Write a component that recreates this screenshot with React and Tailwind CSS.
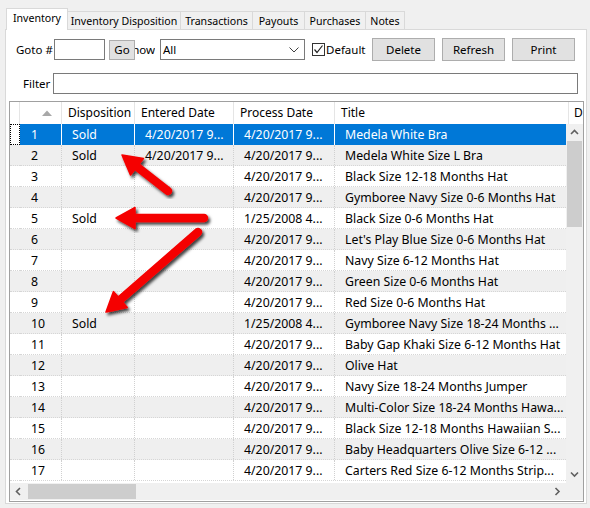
import React from 'react';

const tabs = [
  { label: 'Inventory', w: 'w-[62px]', active: true },
  { label: 'Inventory Disposition', w: 'w-[113px]' },
  { label: 'Transactions', w: 'w-[72px]' },
  { label: 'Payouts', w: 'w-[52px]' },
  { label: 'Purchases', w: 'w-[61px]' },
  { label: 'Notes', w: 'w-[39px]' },
];

const rows = [
  ['1', 'Sold', '4/20/2017 9...', '4/20/2017 9...', 'Medela White Bra'],
  ['2', 'Sold', '4/20/2017 9...', '4/20/2017 9...', 'Medela White Size L Bra'],
  ['3', '', '', '4/20/2017 9...', 'Black Size 12-18 Months Hat'],
  ['4', '', '', '4/20/2017 9...', 'Gymboree Navy Size 0-6 Months Hat'],
  ['5', 'Sold', '', '1/25/2008 4...', 'Black Size 0-6 Months Hat'],
  ['6', '', '', '4/20/2017 9...', "Let's Play Blue Size 0-6 Months Hat"],
  ['7', '', '', '4/20/2017 9...', 'Navy Size 6-12 Months Hat'],
  ['8', '', '', '4/20/2017 9...', 'Green Size 0-6 Months Hat'],
  ['9', '', '', '4/20/2017 9...', 'Red Size 0-6 Months Hat'],
  ['10', 'Sold', '', '1/25/2008 4...', 'Gymboree Navy Size 18-24 Months ...'],
  ['11', '', '', '4/20/2017 9...', 'Baby Gap Khaki Size 6-12 Months Hat'],
  ['12', '', '', '4/20/2017 9...', 'Olive Hat'],
  ['13', '', '', '4/20/2017 9...', 'Navy Size 18-24 Months Jumper'],
  ['14', '', '', '4/20/2017 9...', 'Multi-Color Size 18-24 Months Hawa...'],
  ['15', '', '', '4/20/2017 9...', 'Black Size 12-18 Months Hawaiian S...'],
  ['16', '', '', '4/20/2017 9...', 'Baby Headquarters Olive Size 6-12 ...'],
  ['17', '', '', '4/20/2017 9...', 'Carters Red Size 6-12 Months Strip...'],
];

// red callout arrows: [tailX, tailY, tipX, tipY]
const arrows = [
  [168, 191, 122, 155],
  [204, 218, 116, 218],
  [198, 232, 106, 312],
];

const arrowShape = ([x1, y1, x2, y2]) => {
  const dx = x2 - x1;
  const dy = y2 - y1;
  const len = Math.hypot(dx, dy);
  const ux = dx / len;
  const uy = dy / len;
  const L = 19;
  const W = 10.5;
  const bx = x2 - ux * L;
  const by = y2 - uy * L;
  const head = [
    [x2, y2],
    [bx - uy * W, by + ux * W],
    [bx + uy * W, by - ux * W],
  ]
    .map((p) => p.join(','))
    .join(' ');
  return { head, shaft: [x1, y1, bx + ux * 2, by + uy * 2] };
};

const Chevron = ({ dir }) => {
  const paths = {
    up: 'M1 5 L4.5 1.5 L8 5',
    down: 'M1 1.5 L4.5 5 L8 1.5',
    left: 'M5 1 L1.5 4.5 L5 8',
    right: 'M1.5 1 L5 4.5 L1.5 8',
  };
  const vertical = dir === 'up' || dir === 'down';
  return (
    <svg width={vertical ? 9 : 7} height={vertical ? 7 : 9} viewBox={vertical ? '0 0 9 7' : '0 0 7 9'}>
      <path d={paths[dir]} fill="none" stroke="#606060" strokeWidth="1.6" />
    </svg>
  );
};

const Button = ({ children, className }) => (
  <button className={`h-[23px] bg-[#e1e1e1] border border-[#adadad] text-[11.5px] text-black ${className}`}>
    {children}
  </button>
);

const GridRow = ({ r, i }) => {
  const selected = i === 0;
  const even = (i + 1) % 2 === 0;
  const bg = selected ? 'bg-[#0078d7] text-white' : even ? 'bg-[#efefef] text-black' : 'bg-white text-black';
  const sep = selected ? 'border-r border-white' : 'border-r border-dotted border-[#d0d0d0]';
  const line = selected ? '' : 'border-b border-dotted border-[#d6d6d6]';
  return (
    <div className="flex h-[21px] text-[12.3px] leading-[21px]">
      <div className={`w-[10px] shrink-0 ${selected ? 'border border-dotted border-black bg-white' : `${bg} ${line}`}`} />
      <div className={`flex ${bg} ${line}`}>
        <div className={`w-[42px] pl-[11px] ${sep}`}>{r[0]}</div>
        <div className={`w-[73px] pl-[10px] ${sep}`}>{r[1]}</div>
        <div className={`w-[99px] pl-[10px] whitespace-nowrap overflow-hidden ${sep}`}>{r[2]}</div>
        <div className={`w-[101px] pl-[10px] whitespace-nowrap overflow-hidden ${sep}`}>{r[3]}</div>
        <div className="w-[231px] pl-[10px] whitespace-nowrap overflow-hidden">{r[4]}</div>
      </div>
    </div>
  );
};

export default function App() {
  return (
    <div className="relative w-[590px] h-[508px] bg-[#f0f0f0] font-['Noto_Sans',sans-serif] text-black overflow-hidden">
      {/* tab strip */}
      <div className="flex items-end h-[21px] mt-[8px] pl-[6px]">
        {tabs.map((t) =>
          t.active ? (
            <div
              key={t.label}
              className={`relative z-10 ${t.w} h-[22px] -mb-px bg-white border-t border-l border-r border-[#d9d9d9] text-[10.6px] text-center leading-[18px] whitespace-nowrap`}
            >
              {t.label}
            </div>
          ) : (
            <div
              key={t.label}
              className={`${t.w} h-[18px] bg-[#f0f0f0] border-t border-r border-[#d9d9d9] text-[10.6px] text-center leading-[19px] whitespace-nowrap overflow-hidden`}
            >
              {t.label}
            </div>
          )
        )}
      </div>

      {/* tab page */}
      <div className="ml-[5px] w-[582px] h-[475px] bg-white border border-[#d9d9d9] flex flex-col">
        <div className="flex items-center h-[23px] mt-[8px] text-[11.5px]">
          <span className="ml-[10px] w-[38px] whitespace-nowrap">Goto #</span>
          <div className="w-[51px] h-[21px] border border-[#7a7a7a] bg-white" />
          <div className="relative z-10 ml-[4px] w-[26px] h-[20px] bg-[#e1e1e1] border border-[#adadad] flex items-center justify-center">
            Go
          </div>
          <div className="w-[20px] flex justify-end overflow-hidden whitespace-nowrap">Show</div>
          <div className="ml-[5px] w-[145px] h-[21px] border border-[#7a7a7a] bg-white flex items-center justify-between pl-[2px] pr-[5px]">
            <span>All</span>
            <svg width="10" height="6" viewBox="0 0 10 6">
              <path d="M0.5 0.5 L5 5 L9.5 0.5" fill="none" stroke="#404040" strokeWidth="1" />
            </svg>
          </div>
          <div className="ml-[7px] w-[13px] h-[13px] border border-[#333333] bg-white flex items-center justify-center">
            <svg width="11" height="11" viewBox="0 0 11 11">
              <path d="M1.5 5.5 L4 8.5 L9.5 1.5" fill="none" stroke="#222222" strokeWidth="1.2" />
            </svg>
          </div>
          <span className="ml-[1px] w-[46px]">Default</span>
          <Button className="w-[63px]">Delete</Button>
          <Button className="ml-[7px] w-[63px]">Refresh</Button>
          <Button className="ml-[7px] w-[63px]">Print</Button>
        </div>

        <div className="flex items-center h-[21px] mt-[12px] text-[11.5px]">
          <span className="ml-[17px] w-[30px]">Filter</span>
          <div className="w-[525px] h-[21px] border border-[#7a7a7a] bg-white" />
        </div>

        {/* data grid */}
        <div className="mt-[7px] ml-[3px] w-[575px] h-[401px] border border-[#a0a0a0] bg-white flex flex-col">
          <div className="flex h-[22px] text-[12px] leading-[22px] bg-white">
            <div className="w-[10px] border-r border-[#e5e5e5]" />
            <div className="w-[42px] border-r border-[#e5e5e5] flex items-center justify-center pl-[12px]">
              <svg width="10" height="6" viewBox="0 0 10 6">
                <path d="M0 6 L5 0.5 L10 6 Z" fill="#a8a8a8" />
              </svg>
            </div>
            <div className="w-[73px] pl-[6px] border-r border-[#e5e5e5] whitespace-nowrap overflow-hidden">Disposition</div>
            <div className="w-[99px] pl-[6px] border-r border-[#e5e5e5] whitespace-nowrap">Entered Date</div>
            <div className="w-[101px] pl-[6px] border-r border-[#e5e5e5] whitespace-nowrap">Process Date</div>
            <div className="w-[234px] pl-[6px] border-r border-[#e5e5e5]">Title</div>
            <div className="w-[14px] pl-[5px] overflow-hidden">D</div>
          </div>

          <div className="flex h-[359px]">
            <div className="w-[556px] overflow-hidden">
              {rows.map((r, i) => (
                <GridRow key={r[0]} r={r} i={i} />
              ))}
            </div>
            <div className="w-[17px] bg-[#f0f0f0] flex flex-col">
              <div className="h-[17px] flex items-center justify-center">
                <Chevron dir="up" />
              </div>
              <div className="mx-[1px] h-[86px] bg-[#cdcdcd]" />
              <div className="flex-1" />
              <div className="h-[17px] flex items-center justify-center">
                <Chevron dir="down" />
              </div>
            </div>
          </div>

          <div className="flex h-[17px]">
            <div className="w-[556px] bg-[#f0f0f0] flex items-center">
              <div className="w-[17px] flex items-center justify-center">
                <Chevron dir="left" />
              </div>
              <div className="w-[108px] h-[15px] bg-[#cdcdcd] ml-[1px]" />
              <div className="flex-1" />
              <div className="w-[17px] flex items-center justify-center">
                <Chevron dir="right" />
              </div>
            </div>
            <div className="w-[17px] bg-[#f0f0f0]" />
          </div>
        </div>
      </div>

      {/* callout arrows drawn over the grid */}
      <svg className="absolute left-0 top-0 pointer-events-none" width="590" height="508">
        <defs>
          <filter id="shadow" x="-20%" y="-20%" width="140%" height="140%">
            <feDropShadow dx="2" dy="2.5" stdDeviation="1.6" floodColor="#000" floodOpacity="0.75" />
          </filter>
        </defs>
        {arrows.map((a, i) => {
          const { head, shaft } = arrowShape(a);
          return (
            <g key={i} filter="url(#shadow)">
              <line
                x1={shaft[0]}
                y1={shaft[1]}
                x2={shaft[2]}
                y2={shaft[3]}
                stroke="#f50000"
                strokeWidth="8.5"
                strokeLinecap="round"
              />
              <polygon points={head} fill="#f50000" stroke="#f50000" strokeWidth="1.5" strokeLinejoin="round" />
            </g>
          );
        })}
      </svg>
    </div>
  );
}
